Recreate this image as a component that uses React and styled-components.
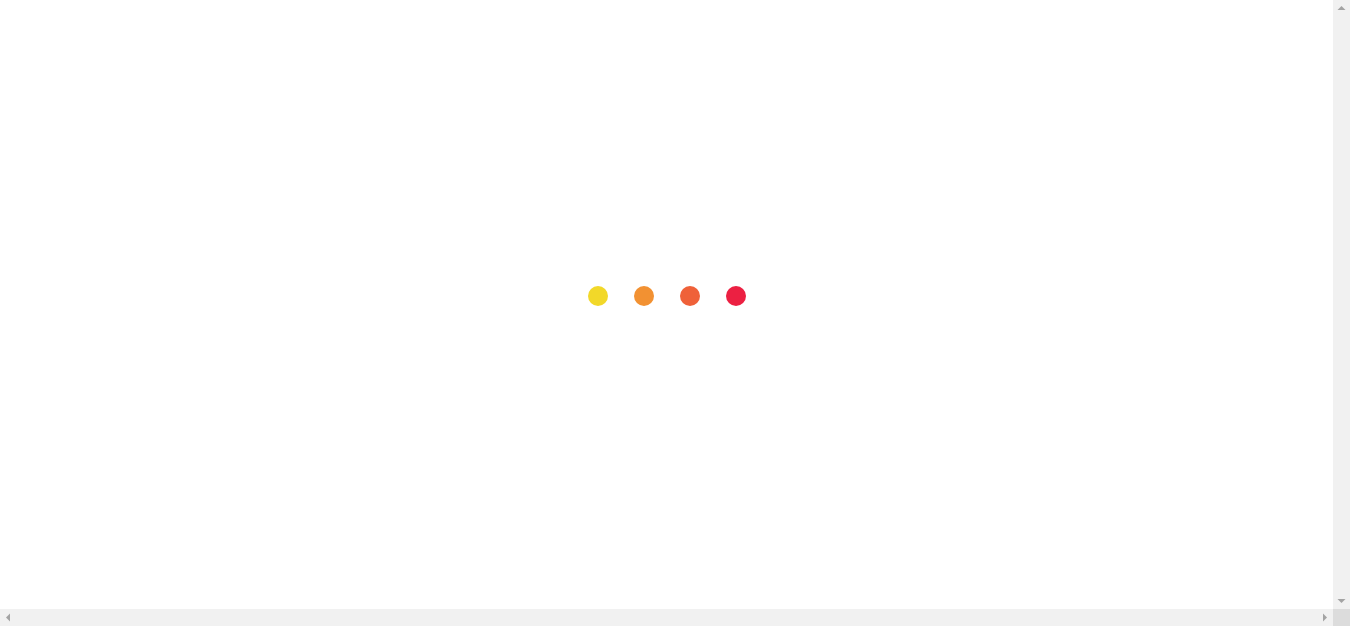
import styled, { createGlobalStyle } from 'styled-components'

const GlobalStyle = createGlobalStyle`
  html, body {
    margin: 0;
    height: 100%;
    overflow: hidden;
    background: #ffffff;
    font-family: "Liberation Sans", Arial, sans-serif;
  }
  #root {
    height: 100%;
  }
`

const Frame = styled.div`
  display: grid;
  grid-template-columns: 1fr 17px;
  grid-template-rows: 1fr 17px;
  height: 100vh;
  width: 100vw;
`

const Screen = styled.div`
  display: flex;
  align-items: center;
  justify-content: center;
  padding-bottom: 17px;
  min-width: 0;
`

const Dots = styled.div`
  display: flex;
  gap: 26px;
  margin-left: 1px;
`

const Dot = styled.span`
  display: block;
  width: 20px;
  height: 20px;
  border-radius: 50%;
  background: ${props => props.color};
`

const Bar = styled.div`
  display: flex;
  flex-direction: ${props => (props.vertical ? 'column' : 'row')};
  justify-content: space-between;
  background: #f1f1f1;
`

const ArrowButton = styled.div`
  width: 17px;
  height: 17px;
  flex: none;

  svg {
    display: block;
  }
`

const Corner = styled.div`
  background: #dcdcdc;
`

const arrows = {
  up: '4.5,10 12.5,10 8.5,6',
  down: '4.5,7 12.5,7 8.5,11',
  left: '10,4.5 10,12.5 6,8.5',
  right: '7,4.5 7,12.5 11,8.5'
}

const Arrow = ({ dir }) => (
  <ArrowButton>
    <svg width="17" height="17" viewBox="0 0 17 17">
      <polygon points={arrows[dir]} fill="#a3a3a3" />
    </svg>
  </ArrowButton>
)

const colors = ['#f2d829', '#f29132', '#ef6139', '#ec2042']

const App = () => {
  return (
    <>
      <GlobalStyle />
      <Frame>
        <Screen>
          <Dots>
            {colors.map(c => <Dot key={c} color={c} />)}
          </Dots>
        </Screen>
        <Bar vertical>
          <Arrow dir="up" />
          <Arrow dir="down" />
        </Bar>
        <Bar>
          <Arrow dir="left" />
          <Arrow dir="right" />
        </Bar>
        <Corner />
      </Frame>
    </>
  )
}

export default App
